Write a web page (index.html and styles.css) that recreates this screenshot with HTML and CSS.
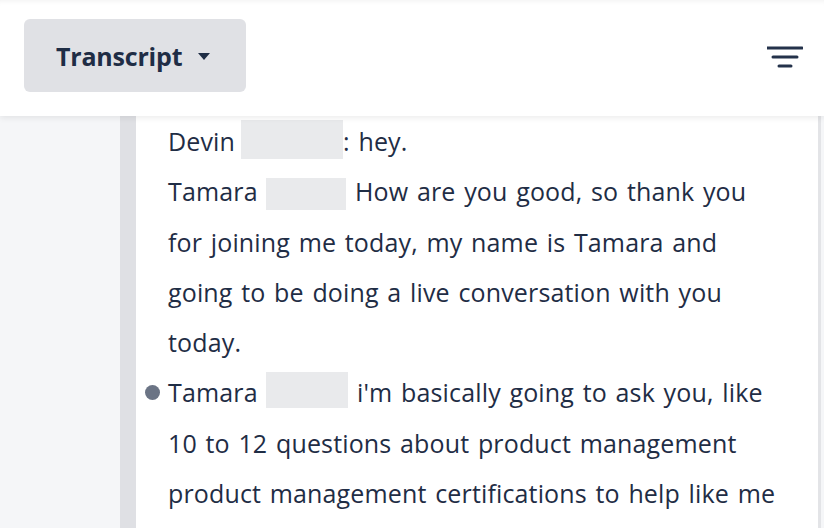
FILE: index.html
```html
<!DOCTYPE html>
<html>
<head>
<meta charset="utf-8">
<link rel="stylesheet" href="styles.css">
</head>
<body>
<div class="page">
  <header class="header">
    <button class="tab-btn">Transcript <span class="caret"></span></button>
    <svg class="filter" width="36" height="24" viewBox="0 0 36 24">
      <path d="M0 3h35M6 12h24M12 21h12" stroke="#24324b" stroke-width="3" stroke-linecap="round" fill="none"/>
    </svg>
  </header>
  <main class="main">
    <div class="side"></div>
    <div class="strip"></div>
    <div class="content">
      <p class="line">Devin<span class="redact r1"></span>: hey.</p>
      <p class="line">Tamara <span class="redact r2"></span> How are you good, so thank you for joining me today, my name is Tamara and going to be doing a live conversation with you today.</p>
      <p class="line active"><span class="dot"></span>Tamara <span class="redact r3"></span> i'm basically going to ask you, like 10 to 12 questions about product management product management certifications to help like me</p>
    </div>
    <div class="edge"></div>
  </main>
</div>
</body>
</html>
```
FILE: styles.css
```css
* { box-sizing: border-box; }
html, body { margin: 0; padding: 0; }
body {
  width: 824px; height: 528px; overflow: hidden;
  font-family: "Open Sans", "Liberation Sans", sans-serif;
  color: #1f2d45;
  background: #f5f6f8;
}
.page { display: flex; flex-direction: column; height: 528px; }
.header {
  height: 116px;
  background: #fff;
  display: flex; align-items: center; justify-content: space-between;
  padding: 0 21px 0 24px;
  box-shadow: 0 2px 6px rgba(0,0,0,0.08), inset 0 6px 6px -6px rgba(0,0,0,0.08);
  position: relative; z-index: 2;
  flex: none;
}
.tab-btn {
  width: 222px; height: 73px;
  margin-top: -5px;
  border: none; border-radius: 6px;
  background: #e0e1e5;
  font-family: inherit;
  font-weight: 700; font-size: 25px;
  color: #1f2d45;
  display: flex; align-items: center; justify-content: flex-start;
  padding: 0 0 0 32px;
  letter-spacing: -0.2px;
}
.caret {
  width: 0; height: 0;
  border-left: 6px solid transparent; border-right: 6px solid transparent;
  border-top: 7px solid #1f2d45;
  margin-left: 16px; margin-top: 2px;
}
.filter { margin-top: -2px; }
.main { flex: 1; display: flex; min-height: 0; }
.side { width: 120px; background: #f5f6f8; }
.strip { width: 16px; background: #dfe0e4; }
.content {
  width: 682px; background: #fff;
  padding: 0 33px 0 32px;
}
.edge { width: 3px; background: #e3e4e7; }
.line {
  margin: 0; font-size: 25px; line-height: 50.3px;
  position: relative;
  letter-spacing: 0.15px;
  word-spacing: 2px;
}
.redact {
  display: inline-block; background: #e9eaec;
  vertical-align: top;
}
.r1 { width: 102px; height: 39px; margin: 4px 0 0 6px; }
.r2 { width: 80px; height: 32px; margin-top: 12px; }
.r3 { width: 82px; height: 36px; margin-top: 4.5px; }
.dot {
  position: absolute; left: -23px; top: 17.5px;
  width: 15px; height: 15px; border-radius: 50%;
  background: #6b7485;
}
```
